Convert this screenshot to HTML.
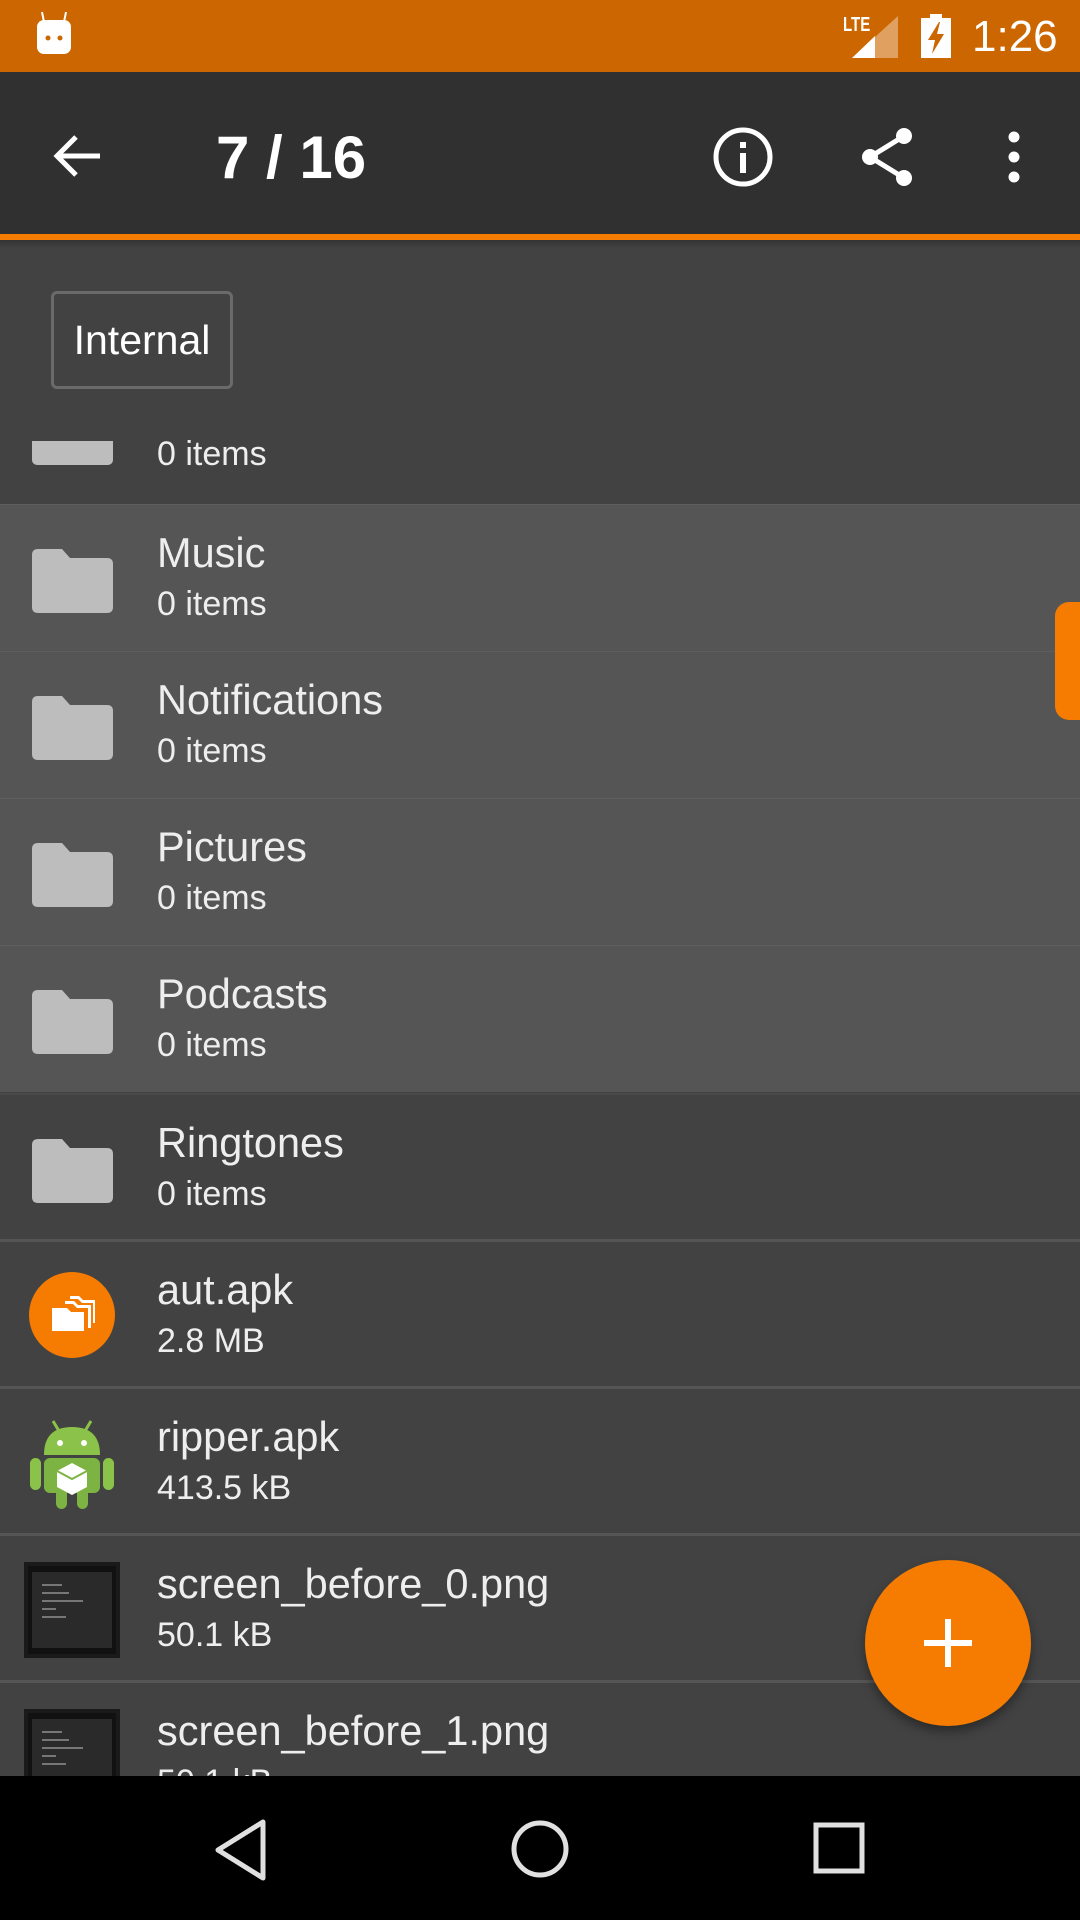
<!DOCTYPE html>
<html><head><meta charset="utf-8"><style>
*{margin:0;padding:0;box-sizing:border-box}
body{width:1080px;height:1920px;position:relative;overflow:hidden;background:#424242;font-family:"Liberation Sans",Roboto,sans-serif;color:#fff}
.abs{position:absolute}
.row{position:absolute;left:0;width:1080px;height:147px;background:#424242;border-top:3px solid #555}
.row.hl{background:#555;border-top:1px solid #5e5e5e}
.nm{position:absolute;left:157px;top:24px;font-size:41.5px;color:#eee;white-space:nowrap}
.sb{position:absolute;left:157px;top:80px;font-size:34px;color:#eee;white-space:nowrap}
.fold{position:absolute;left:32px;top:44px}
.th{position:absolute;left:24px;top:26px;width:96px;height:96px;background:#111;border:4px solid #1a1a1a}
.th div{margin:6px 4px;height:76px;background:#2a2a2a;padding:6px}
.th i{display:block;height:2px;background:#777;margin:6px 0 0 4px}
</style></head><body>
<div class="abs" style="left:0;top:0;width:1080px;height:72px;background:#cc6600"></div>
<svg class="abs" style="left:34px;top:12px" width="40" height="44" viewBox="0 0 40 44"><line x1="8" y1="0" x2="10" y2="10" stroke="#fff" stroke-width="2"/><line x1="32" y1="0" x2="30" y2="10" stroke="#fff" stroke-width="2"/><rect x="3" y="8" width="34" height="34" rx="7" fill="#fff"/><circle cx="14" cy="26" r="2.5" fill="#c60"/><circle cx="26" cy="26" r="2.5" fill="#c60"/></svg>
<div class="abs" style="left:843px;top:14px;font-size:20px;font-weight:bold;transform:scaleX(0.75);transform-origin:left">LTE</div>
<svg class="abs" style="left:852px;top:16px" width="46" height="42"><polygon points="0,42 46,42 46,0" fill="#e0a060"/><polygon points="0,42 23,42 23,20" fill="#fff"/></svg>
<svg class="abs" style="left:921px;top:14px" width="30" height="44"><rect x="9" y="0" width="12" height="5" fill="#fff"/><rect x="0" y="4" width="30" height="40" fill="#fff"/><polygon points="18,8 7,26 14,26 11,40 23,20 16,20 19,8" fill="#c60"/></svg>
<div class="abs" style="left:972px;top:12px;font-size:44px">1:26</div>
<div class="abs" style="left:0;top:72px;width:1080px;height:162px;background:#303030"></div>
<div class="abs" style="left:0;top:234px;width:1080px;height:6px;background:#f57c00"></div>
<div class="abs" style="left:0;top:240px;width:1080px;height:8px;background:linear-gradient(#333,#424242)"></div>
<svg class="abs" style="left:52px;top:131px" width="50" height="50" viewBox="0 0 50 50"><path d="M48 25H6M24 6L5 25l19 19" stroke="#fff" stroke-width="5" fill="none"/></svg>
<div class="abs" style="left:216px;top:123px;font-size:60px;font-weight:bold">7 / 16</div>
<svg class="abs" style="left:713px;top:127px" width="60" height="60"><circle cx="30" cy="30" r="27" stroke="#fff" stroke-width="5" fill="none"/><rect x="27" y="26" width="6" height="20" fill="#fff"/><rect x="27" y="15" width="6" height="6" fill="#fff"/></svg>
<svg class="abs" style="left:858px;top:126px" width="60" height="62"><path d="M46 10L12 31L46 52" stroke="#fff" stroke-width="5" fill="none"/><circle cx="46" cy="10" r="8" fill="#fff"/><circle cx="12" cy="31" r="8" fill="#fff"/><circle cx="46" cy="52" r="8" fill="#fff"/></svg>
<svg class="abs" style="left:1004px;top:131px" width="20" height="52"><circle cx="10" cy="6" r="5.5" fill="#fff"/><circle cx="10" cy="26" r="5.5" fill="#fff"/><circle cx="10" cy="46" r="5.5" fill="#fff"/></svg>
<div class="abs" style="left:51px;top:291px;width:182px;height:98px;border:3px solid #6a6a6a;border-radius:6px;font-size:41px;line-height:92px;text-align:center;color:#fff">Internal</div>
<div class="abs" style="left:32px;top:441px;width:81px;height:24px;background:#bdbdbd;border-radius:0 0 5px 5px"></div>
<div class="abs" style="left:157px;top:435px;font-size:34px;color:#eee">0 items</div>
<div class="row hl" style="top:504px"><svg class="fold" width="81" height="64"><path d="M0 6Q0 0 6 0H30L38 9H75Q81 9 81 15V58Q81 64 75 64H6Q0 64 0 58Z" fill="#bdbdbd"/></svg><div class="nm">Music</div><div class="sb">0 items</div></div>
<div class="row hl" style="top:651px"><svg class="fold" width="81" height="64"><path d="M0 6Q0 0 6 0H30L38 9H75Q81 9 81 15V58Q81 64 75 64H6Q0 64 0 58Z" fill="#bdbdbd"/></svg><div class="nm">Notifications</div><div class="sb">0 items</div></div>
<div class="row hl" style="top:798px"><svg class="fold" width="81" height="64"><path d="M0 6Q0 0 6 0H30L38 9H75Q81 9 81 15V58Q81 64 75 64H6Q0 64 0 58Z" fill="#bdbdbd"/></svg><div class="nm">Pictures</div><div class="sb">0 items</div></div>
<div class="row hl" style="top:945px"><svg class="fold" width="81" height="64"><path d="M0 6Q0 0 6 0H30L38 9H75Q81 9 81 15V58Q81 64 75 64H6Q0 64 0 58Z" fill="#bdbdbd"/></svg><div class="nm">Podcasts</div><div class="sb">0 items</div></div>
<div class="row" style="top:1093px;border-top:2px solid #4a4a4a"><svg class="fold" width="81" height="64"><path d="M0 6Q0 0 6 0H30L38 9H75Q81 9 81 15V58Q81 64 75 64H6Q0 64 0 58Z" fill="#bdbdbd"/></svg><div class="nm">Ringtones</div><div class="sb">0 items</div></div>
<div class="row" style="top:1239px"><svg class="abs" style="left:29px;top:30px" width="86" height="86"><circle cx="43" cy="43" r="43" fill="#f57c00"/><path d="M23 36H38L42 40H55V59H23Z" fill="#fff"/><path d="M36 29H45L49 33H62V56H59V36H48L44 32H36Z" fill="#fff"/><path d="M41 24H50L54 28H66V51H64V31H53L49 27H41Z" fill="#fff"/></svg><div class="nm">aut.apk</div><div class="sb">2.8 MB</div></div>
<div class="row" style="top:1386px"><svg class="abs" style="left:29px;top:26px" width="86" height="96" viewBox="0 0 86 96"><line x1="24" y1="6" x2="30" y2="16" stroke="#8bc34a" stroke-width="3"/><line x1="62" y1="6" x2="56" y2="16" stroke="#8bc34a" stroke-width="3"/><path d="M15 40Q15 12 43 12Q71 12 71 40Z" fill="#8bc34a"/><circle cx="31" cy="28" r="3" fill="#fff"/><circle cx="55" cy="28" r="3" fill="#fff"/><rect x="15" y="43" width="56" height="35" rx="6" fill="#7cb342"/><rect x="1" y="43" width="11" height="32" rx="5.5" fill="#8bc34a"/><rect x="74" y="43" width="11" height="32" rx="5.5" fill="#8bc34a"/><rect x="27" y="72" width="11" height="22" rx="5.5" fill="#7cb342"/><rect x="48" y="72" width="11" height="22" rx="5.5" fill="#7cb342"/><polygon points="43,48 58,56 58,72 43,80 28,72 28,56" fill="#fff"/><polyline points="28,56 43,64 58,56 M43,64 43,80" stroke="#7cb342" stroke-width="2" fill="none"/></svg><div class="nm">ripper.apk</div><div class="sb">413.5 kB</div></div>
<div class="row" style="top:1533px"><div class="th"><div><i style="width:30%"></i><i style="width:40%"></i><i style="width:60%"></i><i style="width:20%"></i><i style="width:35%"></i></div></div><div class="nm">screen_before_0.png</div><div class="sb">50.1 kB</div></div>
<div class="row" style="top:1680px"><div class="th"><div><i style="width:30%"></i><i style="width:40%"></i><i style="width:60%"></i><i style="width:20%"></i><i style="width:35%"></i></div></div><div class="nm">screen_before_1.png</div><div class="sb">50.1 kB</div></div>
<div class="abs" style="left:1055px;top:602px;width:30px;height:118px;background:#f57c00;border-radius:14px 0 0 14px"></div>
<div class="abs" style="left:865px;top:1560px;width:166px;height:166px;border-radius:50%;background:#f57c00;box-shadow:0 6px 10px rgba(0,0,0,.35)"></div>
<div class="abs" style="left:924px;top:1640px;width:48px;height:6px;background:#fff"></div>
<div class="abs" style="left:945px;top:1619px;width:6px;height:48px;background:#fff"></div>
<div class="abs" style="left:0;top:1776px;width:1080px;height:144px;background:#000"></div>
<svg class="abs" style="left:210px;top:1818px" width="60" height="64"><path d="M53 4L8 32L53 60Z" stroke="#e0e0e0" stroke-width="5" fill="none" stroke-linejoin="round"/></svg>
<svg class="abs" style="left:508px;top:1817px" width="64" height="64"><circle cx="32" cy="32" r="26" stroke="#e0e0e0" stroke-width="5" fill="none"/></svg>
<svg class="abs" style="left:812px;top:1821px" width="56" height="56"><rect x="4" y="4" width="46" height="46" stroke="#e0e0e0" stroke-width="5" fill="none"/></svg>
</body></html>
